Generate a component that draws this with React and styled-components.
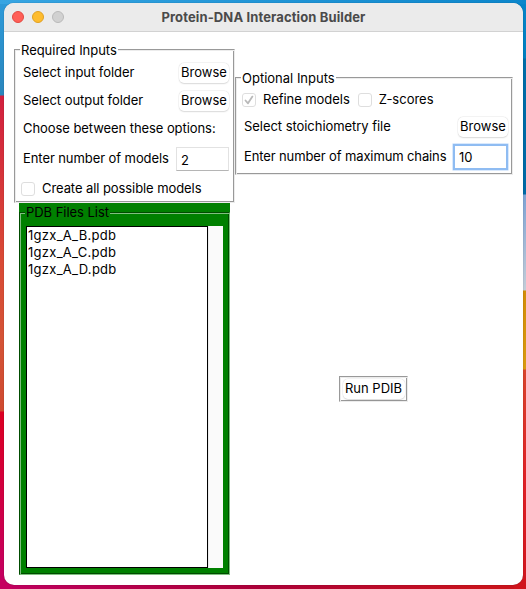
import React from 'react';
import styled, { createGlobalStyle } from 'styled-components';

const Global = createGlobalStyle`
  * { box-sizing: border-box; }
  html, body { margin: 0; height: 100%; overflow: hidden; }
  body { font: 13px/16px Inter, "Liberation Sans", sans-serif; color: #000; }
`;

const Desktop = styled.div`
  width: 526px;
  height: 589px;
  padding: 3px 3px 4px 4px;
  background:
    linear-gradient(90deg, #37a5e2, #0c86cb) 0 0 / 526px 4px no-repeat,
    linear-gradient(#2e9bda, #2a86bd 95px, #d2203f 96px, #d94a35 260px, #d45336 340px, #cf4a30 411px, #dc0022 412px, #c5005f 575px) 0 0 / 12px 589px no-repeat,
    linear-gradient(#0784c9, #007fbf 58px, #006da8 59px, #0069a5 194px, #7fa3d4 195px, #c3cdd8 290px, #d28c08 291px, #d99a10 369px, #d8432c 370px, #df2026 480px, #cf141c 589px) 100% 0 / 12px 589px no-repeat,
    linear-gradient(90deg, #c00060, #ab0038 260px, #c9131c 480px);
`;

const Window = styled.main`
  height: 582px;
  border-radius: 10px;
  background: #fff;
  overflow: hidden;
  box-shadow: 0 0 1px rgba(0, 0, 0, 0.5);
`;

const TitleBar = styled.header`
  display: grid;
  grid-template-columns: 60px 1fr 60px;
  align-items: center;
  height: 29px;
  background: #ebebeb;
  border-bottom: 1px solid #d2d2d2;
`;

const Lights = styled.div`
  display: flex;
  gap: 8px;
  padding-left: 8px;
`;

const Light = styled.i`
  width: 12px;
  height: 12px;
  border-radius: 50%;
  background: ${(p) => p.$fill};
  border: 1px solid ${(p) => p.$edge};
`;

const Title = styled.h1`
  margin: 0 0 1px;
  font-size: 13px;
  line-height: 16px;
  font-weight: 700;
  letter-spacing: 0.12px;
  color: #4a4a4a;
  text-align: center;
  white-space: nowrap;
`;

const Content = styled.div`
  display: flex;
  align-items: flex-start;
  padding: 17px 0 0 10px;
`;

const LeftColumn = styled.div`
  width: 221px;
`;

const RightColumn = styled.div`
  display: flex;
  flex-direction: column;
  width: 278px;
  padding-top: 28px;
`;

const Groove = styled.section`
  border: 1px solid;
  border-color: ${(p) => (p.$green ? '#004c00 #7fbf7f #7fbf7f #004c00' : '#999 #ececec #ececec #999')};
  box-shadow: ${(p) =>
    p.$green
      ? 'inset 1px 1px #7fbf7f, inset -1px -1px #004c00'
      : 'inset 1px 1px #ececec, inset -1px -1px #999'};
`;

const RequiredGroup = styled(Groove)`
  height: 154px;
  padding: 0 5px 0 6px;
`;

const OptionalGroup = styled(Groove)`
  height: 98px;
  padding: 0 4px 0 6px;
`;

const Legend = styled.h2`
  width: max-content;
  height: 16px;
  margin: -8px 0 ${(p) => p.$after || 0}px -1px;
  padding: 0 1px;
  font-size: 13px;
  line-height: ${(p) => p.$line || 17}px;
  font-weight: 400;
  letter-spacing: ${(p) => p.$track || 0}px;
  white-space: nowrap;
  background: ${(p) => (p.$green ? '#008000' : '#fff')};
`;

const Row = styled.div`
  display: flex;
  align-items: center;
  justify-content: ${(p) => (p.$start ? 'flex-start' : 'space-between')};
  height: ${(p) => p.$h}px;
  padding-left: ${(p) => (p.$start ? 0 : 2)}px;
`;

const Text = styled.span`
  padding-bottom: 2px;
  white-space: nowrap;
  letter-spacing: ${(p) => p.$track || 0}px;
`;

const Button = styled.button`
  width: ${(p) => p.$w || 50}px;
  height: 20px;
  padding: 0 0 1px;
  border: 0;
  border-radius: 5px;
  background: #fff;
  box-shadow: 0 0 0 0.5px rgba(0, 0, 0, 0.05), 0 0.5px 1.5px rgba(0, 0, 0, 0.13);
  font: inherit;
  line-height: 17px;
  color: #000;
  white-space: nowrap;
`;

const Field = styled.input`
  width: 53px;
  height: 24px;
  padding: 1px 0 0 4px;
  border: 1px solid #e2e2e2;
  border-bottom-color: #b5b5b5;
  border-radius: 0;
  outline: 0;
  background: #fff;
  font: inherit;
  color: #000;
`;

const FocusedField = styled(Field)`
  width: 55px;
  height: 26px;
  padding-bottom: 1px;
  border: 2px solid #8fbcf2;
  box-shadow: 0 0 0 0.5px #b4d4fb;
`;

const Check = styled.span`
  display: grid;
  place-items: center;
  flex: none;
  width: 14px;
  height: 14px;
  margin: 0 7px 0 ${(p) => p.$before || 0}px;
  border: 1px solid #dedede;
  border-radius: 3px;
  background: #fff;
`;

const FilesPanel = styled.div`
  width: 211px;
  height: 372px;
  margin-left: 5px;
  padding-top: 9px;
  background: #008000;
`;

const FilesGroup = styled(Groove)`
  height: 363px;
  padding: 0 6px;
`;

const ListArea = styled.div`
  display: flex;
  height: 342px;
`;

const List = styled.ul`
  width: 182px;
  margin: 0;
  padding: 0 1px;
  border: 1px solid #000;
  background: #fff;
  list-style: none;
`;

const File = styled.li`
  height: 17px;
  line-height: 17px;
  letter-spacing: 0.28px;
`;

const Scrollbar = styled.div`
  width: 15px;
  background: #fafafa;
  border-left: 1px solid #ececec;
`;

const RunFrame = styled(Groove)`
  display: grid;
  place-items: center;
  width: 69px;
  height: 26px;
  margin: 201px 0 0 104px;
`;

const files = ['1gzx_A_B.pdb', '1gzx_A_C.pdb', '1gzx_A_D.pdb'];

export default function App() {
  return (
    <Desktop>
      <Global />
      <Window>
        <TitleBar>
          <Lights>
            <Light $fill="#ff5f57" $edge="#e14942" />
            <Light $fill="#febc2e" $edge="#dfa023" />
            <Light $fill="#d1d1d1" $edge="#b9b9b9" />
          </Lights>
          <Title>Protein-DNA Interaction Builder</Title>
        </TitleBar>
        <Content>
          <LeftColumn>
            <RequiredGroup>
              <Legend $after={1} $track={-0.03}>Required Inputs</Legend>
              <Row $h={28}><Text $track={-0.04}>Select input folder</Text><Button>Browse</Button></Row>
              <Row $h={28}><Text $track={-0.05}>Select output folder</Text><Button>Browse</Button></Row>
              <Row $h={28}><Text $track={-0.07}>Choose between these options:</Text></Row>
              <Row $h={32}><Text $track={-0.08}>Enter number of models</Text><Field defaultValue="2" /></Row>
              <Row $h={27} $start><Check /><Text $track={-0.08}>Create all possible models</Text></Row>
            </RequiredGroup>
            <FilesPanel>
              <FilesGroup $green>
                <Legend $green $after={5} $line={15} $track={-0.04}>PDB Files List</Legend>
                <ListArea>
                  <List>{files.map((f) => <File key={f}>{f}</File>)}</List>
                  <Scrollbar />
                </ListArea>
              </FilesGroup>
            </FilesPanel>
          </LeftColumn>
          <RightColumn>
            <OptionalGroup>
              <Legend>Optional Inputs</Legend>
              <Row $h={27} $start>
                <Check>
                  <svg width="10" height="10" viewBox="0 0 10 10" fill="none" stroke="#b9b9b9" strokeWidth="1.8" strokeLinecap="round" strokeLinejoin="round">
                    <path d="M1.5 5.5 4 8.3 8.4 1.6" />
                  </svg>
                </Check>
                <Text $track={-0.05}>Refine models</Text>
                <Check $before={8} />
                <Text>Z-scores</Text>
              </Row>
              <Row $h={27}><Text $track={-0.05}>Select stoichiometry file</Text><Button>Browse</Button></Row>
              <Row $h={33}><Text $track={-0.12}>Enter number of maximum chains</Text><FocusedField defaultValue="10" /></Row>
            </OptionalGroup>
            <RunFrame as="div"><Button $w={62}>Run PDIB</Button></RunFrame>
          </RightColumn>
        </Content>
      </Window>
    </Desktop>
  );
}
